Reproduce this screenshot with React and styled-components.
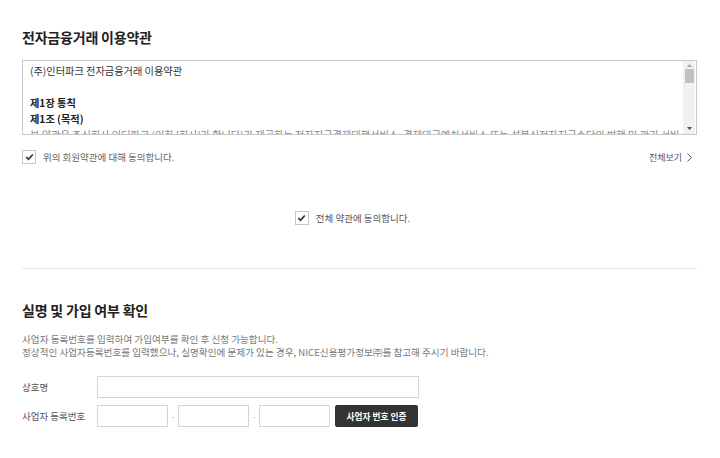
import React from 'react';
import styled, { createGlobalStyle } from 'styled-components';

const GlobalStyle = createGlobalStyle`
  body {
    margin: 0;
    background: #ffffff;
    font-family: "Noto Sans CJK KR", "Noto Sans", sans-serif;
    color: #333;
  }
`;

const Page = styled.div`
  width: 720px;
  padding: 28px 23px 0 22px;
  box-sizing: border-box;
`;

const Title = styled.h2`
  margin: 0;
  font-size: 14px;
  line-height: 18px;
  font-weight: 700;
  color: #222;
  letter-spacing: -0.2px;
`;

const TermsBox = styled.div`
  margin-top: 14px;
  height: 75px;
  border: 1px solid #c9c9c9;
  box-sizing: border-box;
  display: flex;
`;

const TermsText = styled.div`
  flex: 1;
  overflow: hidden;
  padding: 2px 8px 0 7px;
  font-size: 10.2px;
  line-height: 16px;
  color: #333;
  white-space: nowrap;

  p {
    margin: 0;
  }
`;

const Blank = styled.p`
  height: 16px;
`;

const Strong = styled.p`
  font-weight: 700;
  color: #222;
`;

const Muted = styled.p`
  color: #888;
`;

const Scrollbar = styled.div`
  width: 12px;
  margin-right: 1px;
  background: #f1f1f1;
  display: flex;
  flex-direction: column;
  align-items: center;
`;

const Arrow = styled.div`
  height: 8px;
  display: flex;
  align-items: center;
  justify-content: center;
  margin-top: ${p => (p.$down ? 'auto' : '0')};
  margin-bottom: ${p => (p.$down ? '2px' : '0')};
`;

const Thumb = styled.div`
  width: 9px;
  height: 14px;
  background: #c1c1c1;
`;

const AgreeRow = styled.div`
  margin-top: 14px;
  display: flex;
  align-items: center;
  justify-content: space-between;
  height: 16px;
`;

const CheckLabel = styled.label`
  display: inline-flex;
  align-items: center;
  gap: 7px;
  font-size: 9.5px;
  color: ${p => (p.$strong ? '#555' : '#666')};
  cursor: pointer;
`;

const Box = styled.span`
  width: 12px;
  height: 12px;
  border: 1px solid #c6c6c6;
  background: #fff;
  display: flex;
  align-items: center;
  justify-content: center;
`;

const MoreLink = styled.a`
  display: inline-flex;
  align-items: center;
  gap: 5px;
  padding-right: 5px;
  font-size: 9px;
  color: #555;
  text-decoration: none;
`;

const AllAgree = styled.div`
  margin-top: 45px;
  height: 16px;
  display: flex;
  justify-content: center;
  padding-right: 14px;
`;

const Divider = styled.hr`
  margin: 42px 0 0;
  border: 0;
  border-top: 1px solid #e6e6e6;
`;

const SecondTitle = styled(Title)`
  margin-top: 32px;
`;

const Desc = styled.div`
  margin-top: 14px;
  font-size: 9.6px;
  line-height: 13px;
  color: #777;
`;

const Form = styled.div`
  margin-top: 17px;
  display: grid;
  grid-template-columns: 75px auto;
  row-gap: 7px;
  align-items: center;
  justify-content: start;
`;

const Label = styled.span`
  font-size: 9.5px;
  color: #555;
`;

const Input = styled.input`
  width: ${p => p.$w}px;
  height: 22px;
  box-sizing: border-box;
  border: 1px solid #d4d4d4;
  padding: 0 6px;
  margin: 0;
  font-size: 10px;
  outline: none;
`;

const NumberRow = styled.div`
  display: flex;
  align-items: center;
`;

const Dash = styled.span`
  width: 10px;
  text-align: center;
  font-size: 9px;
  color: #bbb;
`;

const VerifyButton = styled.button`
  margin-left: 5px;
  width: 83px;
  height: 22px;
  border: 0;
  border-radius: 2px;
  background: #333;
  color: #fff;
  font-family: inherit;
  font-size: 8.7px;
  font-weight: 700;
  cursor: pointer;
`;

function Check() {
  return (
    <Box>
      <svg width="9" height="8" viewBox="0 0 9 8">
        <polyline points="1.2,4 3.5,6.3 7.8,1.5" fill="none" stroke="#333" strokeWidth="1.7" />
      </svg>
    </Box>
  );
}

function App() {
  return (
    <>
      <GlobalStyle />
      <Page>
        <Title>전자금융거래 이용약관</Title>
        <TermsBox>
          <TermsText>
            <p>(주)인터파크 전자금융거래 이용약관</p>
            <Blank />
            <Strong>제1장 통칙</Strong>
            <Strong>제1조 (목적)</Strong>
            <Muted>본 약관은 주식회사 인터파크 (이하 '회사'라 합니다)가 제공하는 전자지급결제대행서비스, 결제대금예치서비스 또는 선불식전자지급수단의 발행 및 관리 서비스(이하</Muted>
          </TermsText>
          <Scrollbar>
            <Arrow>
              <svg width="5" height="3" viewBox="0 0 5 3"><polygon points="0,3 2.5,0 5,3" fill="#a3a3a3" /></svg>
            </Arrow>
            <Thumb />
            <Arrow $down>
              <svg width="5" height="3" viewBox="0 0 5 3"><polygon points="0,0 2.5,3 5,0" fill="#505050" /></svg>
            </Arrow>
          </Scrollbar>
        </TermsBox>

        <AgreeRow>
          <CheckLabel>
            <Check />
            위의 회원약관에 대해 동의합니다.
          </CheckLabel>
          <MoreLink href="#">
            전체보기
            <svg width="5" height="9" viewBox="0 0 5 9">
              <polyline points="0.5,0.5 4.3,4.5 0.5,8.5" fill="none" stroke="#555" strokeWidth="1" />
            </svg>
          </MoreLink>
        </AgreeRow>

        <AllAgree>
          <CheckLabel $strong>
            <Check />
            전체 약관에 동의합니다.
          </CheckLabel>
        </AllAgree>

        <Divider />

        <SecondTitle>실명 및 가입 여부 확인</SecondTitle>
        <Desc>
          사업자 등록번호를 입력하여 가입여부를 확인 후 신청 가능합니다.
          <br />
          정상적인 사업자등록번호를 입력했으나, 실명확인에 문제가 있는 경우, NICE신용평가정보㈜를 참고해 주시기 바랍니다.
        </Desc>

        <Form>
          <Label>상호명</Label>
          <Input $w={322} type="text" />
          <Label>사업자 등록번호</Label>
          <NumberRow>
            <Input $w={71} type="text" />
            <Dash>-</Dash>
            <Input $w={71} type="text" />
            <Dash>-</Dash>
            <Input $w={71} type="text" />
            <VerifyButton>사업자 번호 인증</VerifyButton>
          </NumberRow>
        </Form>
      </Page>
    </>
  );
}

export default App;
